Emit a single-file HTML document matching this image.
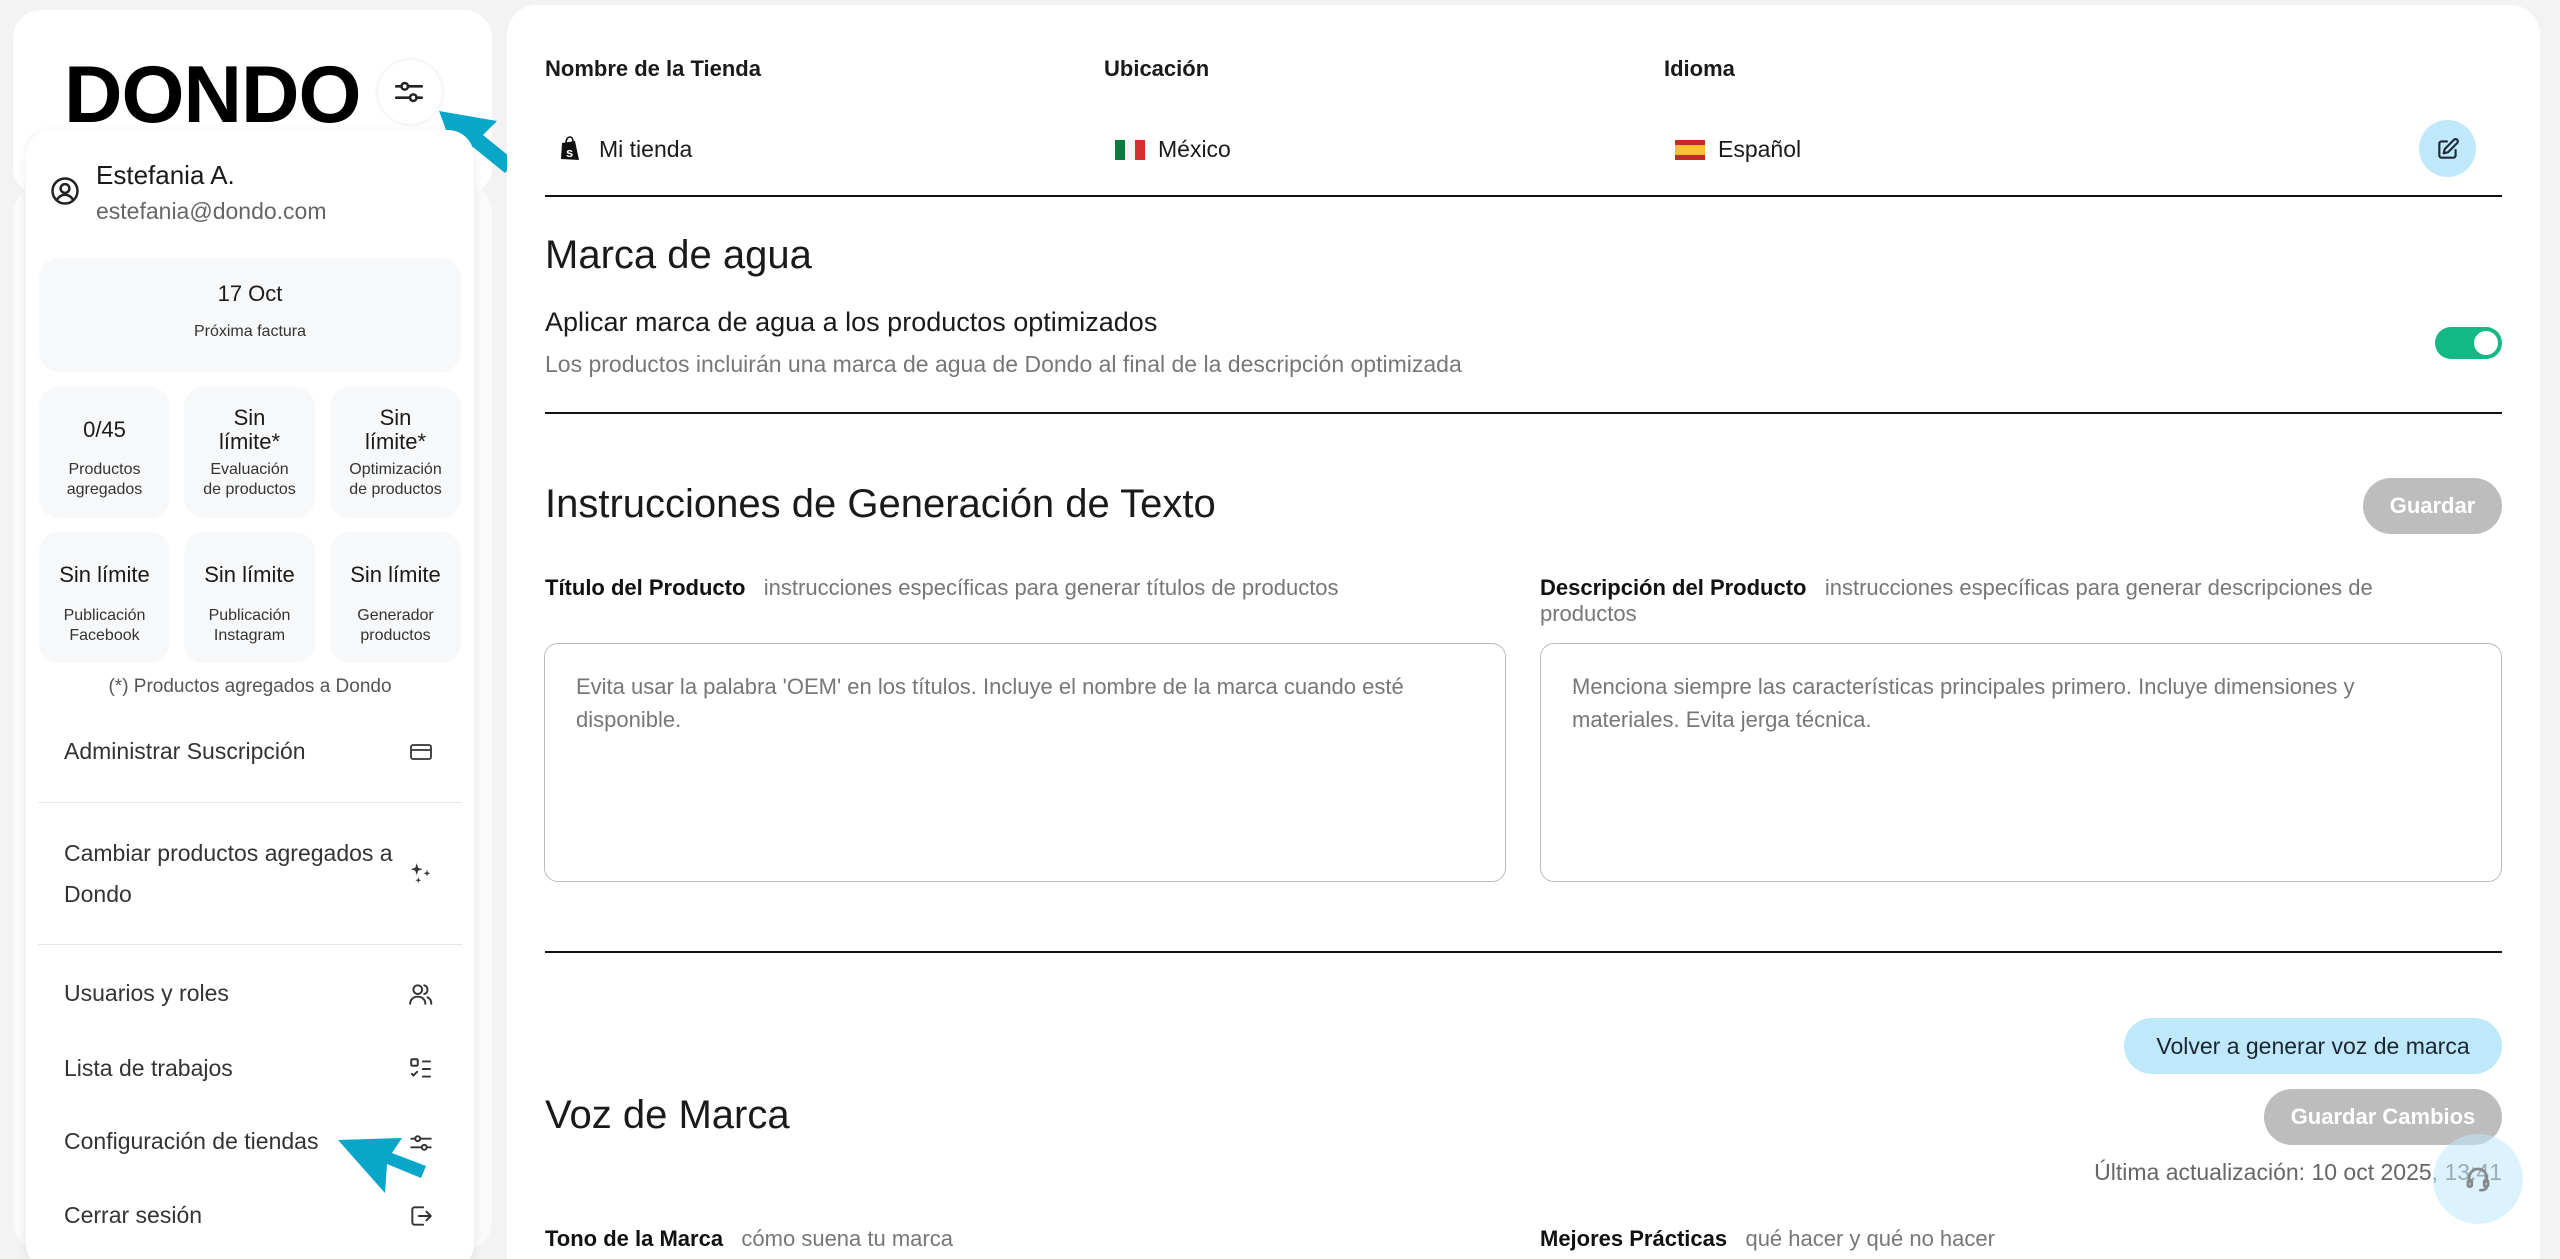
<!DOCTYPE html>
<html style="width:2560px;height:1259px;overflow:hidden"><head><meta charset="utf-8"><style>
*{margin:0;padding:0;box-sizing:border-box}
body{width:2560px;height:1259px;overflow:hidden;background:#f3f3f3;font-family:"Liberation Sans",sans-serif;color:#1a1a1a;position:relative}
.a{position:absolute;white-space:nowrap}
.card{position:absolute;background:#fff;border-radius:30px}
.box{position:absolute;background:#f7f8f9;border-radius:20px;text-align:center}
.v{position:absolute;left:0;right:0;font-size:22px;line-height:24px;color:#1a1a1a}
.l{position:absolute;left:0;right:0;font-size:16px;line-height:20px;color:#333}
.m{position:absolute;left:64px;font-size:23px;color:#333;line-height:26px}
.hr{position:absolute;height:2px;background:#111;left:545px;width:1957px}
.h1{font-size:40px;color:#1a1a1a}
.lab{font-size:22px}
.lab b{color:#111}
.lab span{color:#777}
.ta{position:absolute;border:1.5px solid #bbb;border-radius:14px;top:643px;height:239px;width:962px;padding:26px 31px;font-size:22px;line-height:33px;color:#777;white-space:normal}
</style></head><body>

<div class="card" style="left:13px;top:10px;width:479px;height:185px;border-radius:28px"></div>
<div class="card" style="left:13px;top:185px;width:479px;height:1065px;border-radius:28px;background:#fafafa"></div>
<div class="a" style="left:64px;top:50px;font-size:81px;font-weight:bold;letter-spacing:-1px;line-height:90px;color:#000">DONDO</div>
<div class="a" style="left:378px;top:60px;width:64px;height:64px;border-radius:50%;background:#fff;box-shadow:0 0 4px rgba(0,0,0,.12)"></div>
<svg class="a" style="left:392px;top:75px" width="34" height="34" viewBox="0 0 24 24" fill="none" stroke="#222" stroke-width="1.8" stroke-linecap="round"><circle cx="9" cy="8" r="2.3"/><path d="M3 8h3.7M11.3 8H21"/><circle cx="15" cy="16" r="2.3"/><path d="M3 16h9.7M17.3 16H21"/></svg>
<svg class="a" style="left:425px;top:95px" width="95" height="85" viewBox="0 0 95 85"><polygon points="14,16 72,26 58,40 90,66 80,78 48,52 34,70" fill="#08a7c9"/></svg>

<div class="card" style="left:26px;top:130px;width:448px;height:1140px;border-radius:26px;box-shadow:0 2px 10px rgba(0,0,0,.08)"></div>
<svg class="a" style="left:50px;top:176px" width="30" height="30" viewBox="0 0 24 24" fill="none" stroke="#222" stroke-width="2"><circle cx="12" cy="12" r="10"/><circle cx="12" cy="10" r="3.5"/><path d="M5.5 19c2-3 4-4 6.5-4s4.5 1 6.5 4"/></svg>
<div class="a" style="left:96px;top:160px;font-size:26px;line-height:30px;color:#1a1a1a">Estefania A.</div>
<div class="a" style="left:96px;top:198px;font-size:23px;line-height:26px;color:#666">estefania@dondo.com</div>

<div class="box" style="left:39px;top:258px;width:422px;height:114px"><div class="v" style="top:24px">17 Oct</div><div class="l" style="top:64px">Próxima factura</div></div>

<div class="box" style="left:39px;top:387px;width:131px;height:131px"><div class="v" style="top:31px">0/45</div><div class="l" style="top:73px">Productos<br>agregados</div></div>
<div class="box" style="left:184px;top:387px;width:131px;height:131px"><div class="v" style="top:19px;line-height:24px">Sin<br>límite*</div><div class="l" style="top:73px">Evaluación<br>de productos</div></div>
<div class="box" style="left:330px;top:387px;width:131px;height:131px"><div class="v" style="top:19px;line-height:24px">Sin<br>límite*</div><div class="l" style="top:73px">Optimización<br>de productos</div></div>

<div class="box" style="left:39px;top:532px;width:131px;height:131px"><div class="v" style="top:31px">Sin límite</div><div class="l" style="top:74px">Publicación<br>Facebook</div></div>
<div class="box" style="left:184px;top:532px;width:131px;height:131px"><div class="v" style="top:31px">Sin límite</div><div class="l" style="top:74px">Publicación<br>Instagram</div></div>
<div class="box" style="left:330px;top:532px;width:131px;height:131px"><div class="v" style="top:31px">Sin límite</div><div class="l" style="top:74px">Generador<br>productos</div></div>

<div class="a" style="left:26px;width:448px;text-align:center;top:676px;font-size:19px;color:#555">(*) Productos agregados a Dondo</div>

<div class="m" style="top:738px">Administrar Suscripción</div>
<svg class="a" style="left:408px;top:740px" width="26" height="24" viewBox="0 0 24 24" fill="none" stroke="#333" stroke-width="1.8"><rect x="2" y="5" width="20" height="14" rx="2"/><path d="M2 10h20"/></svg>
<div class="a" style="left:38px;top:802px;width:424px;height:1px;background:#e6e6e6"></div>
<div class="m" style="top:833px;line-height:41px;white-space:normal;width:350px">Cambiar productos agregados a Dondo</div>
<svg class="a" style="left:408px;top:860px" width="26" height="26" viewBox="0 0 24 24" fill="#333"><path d="M8 3l1.3 4.2L13.5 8.5 9.3 9.8 8 14 6.7 9.8 2.5 8.5 6.7 7.2z"/><path d="M17.5 9l.8 2.4 2.4.8-2.4.8-.8 2.4-.8-2.4-2.4-.8 2.4-.8z"/><path d="M9.5 16l.7 2 2 .7-2 .7-.7 2-.7-2-2-.7 2-.7z"/></svg>
<div class="a" style="left:38px;top:944px;width:424px;height:1px;background:#e6e6e6"></div>
<div class="m" style="top:980px">Usuarios y roles</div>
<svg class="a" style="left:408px;top:981px" width="26" height="26" viewBox="0 0 24 24" fill="none" stroke="#333" stroke-width="1.8" stroke-linecap="round"><circle cx="9" cy="8" r="4"/><path d="M2 21c0-4 3-6.5 7-6.5s7 2.5 7 6.5"/><path d="M15 4c2 .5 3 2 3 4s-1 3.5-3 4M18 15c2 1 3.5 3 3.5 6"/></svg>
<div class="m" style="top:1055px">Lista de trabajos</div>
<svg class="a" style="left:408px;top:1056px" width="26" height="26" viewBox="0 0 24 24" fill="none" stroke="#333" stroke-width="1.8"><rect x="3" y="3" width="6" height="6" rx="1"/><path d="M3 16l2 2 4-4M13 5h8M13 12h8M13 19h8"/></svg>
<div class="m" style="top:1128px">Configuración de tiendas</div>
<svg class="a" style="left:408px;top:1130px" width="26" height="26" viewBox="0 0 24 24" fill="none" stroke="#333" stroke-width="1.8" stroke-linecap="round"><circle cx="9" cy="8" r="2.3"/><path d="M3 8h3.7M11.3 8H21"/><circle cx="15" cy="16" r="2.3"/><path d="M3 16h9.7M17.3 16H21"/></svg>
<svg class="a" style="left:330px;top:1128px" width="100" height="72" viewBox="0 0 100 72"><polygon points="8,12 72,10 62,25 96,38 91,50 57,36 55,65" fill="#08a7c9"/></svg>
<div class="m" style="top:1202px">Cerrar sesión</div>
<svg class="a" style="left:408px;top:1203px" width="26" height="26" viewBox="0 0 24 24" fill="none" stroke="#333" stroke-width="1.8" stroke-linecap="round" stroke-linejoin="round"><path d="M14 4H6a2 2 0 0 0-2 2v12a2 2 0 0 0 2 2h8"/><path d="M10 12h11M17 8l4 4-4 4"/></svg>

<div class="card" style="left:507px;top:5px;width:2033px;height:1254px;border-radius:30px 30px 0 0"></div>

<div class="a" style="left:545px;top:56px;font-size:22px;font-weight:bold">Nombre de la Tienda</div>
<div class="a" style="left:1104px;top:56px;font-size:22px;font-weight:bold">Ubicación</div>
<div class="a" style="left:1664px;top:56px;font-size:22px;font-weight:bold">Idioma</div>

<svg class="a" style="left:559px;top:136px" width="22" height="26" viewBox="0 0 22 26"><path d="M3 7l13-2 4 19-18-1z" fill="#111"/><path d="M7 7c0-4 2-6 4-6s3 2 3 5" fill="none" stroke="#111" stroke-width="1.6"/><text x="7" y="21" font-size="13" font-weight="bold" fill="#fff" font-family="Liberation Sans">s</text></svg>
<div class="a" style="left:599px;top:136px;font-size:23px">Mi tienda</div>
<div class="a" style="left:1115px;top:140px;width:30px;height:20px;background:linear-gradient(90deg,#0b7a3e 0 33%,#f4f4f4 33% 66%,#d32f2f 66%)"></div>
<div class="a" style="left:1158px;top:136px;font-size:23px">México</div>
<div class="a" style="left:1675px;top:140px;width:30px;height:20px;background:linear-gradient(#c62828 0 25%,#fbc02d 25% 75%,#c62828 75%)"></div>
<div class="a" style="left:1718px;top:136px;font-size:23px">Español</div>
<div class="a" style="left:2419px;top:120px;width:57px;height:57px;border-radius:50%;background:#bfe9fb"></div>
<svg class="a" style="left:2435px;top:136px" width="26" height="26" viewBox="0 0 24 24" fill="none" stroke="#1d2a3a" stroke-width="2" stroke-linecap="round" stroke-linejoin="round"><path d="M11 5H6a2 2 0 0 0-2 2v11a2 2 0 0 0 2 2h11a2 2 0 0 0 2-2v-5"/><path d="M17.5 3.5a2.1 2.1 0 0 1 3 3L12 15l-4 1 1-4z"/></svg>
<div class="hr" style="top:195px"></div>

<div class="a h1" style="left:545px;top:233px">Marca de agua</div>
<div class="a" style="left:545px;top:307px;font-size:27px">Aplicar marca de agua a los productos optimizados</div>
<div class="a" style="left:545px;top:351px;font-size:23px;color:#777">Los productos incluirán una marca de agua de Dondo al final de la descripción optimizada</div>
<div class="a" style="left:2435px;top:327px;width:67px;height:32px;border-radius:16px;background:#14b885"></div>
<div class="a" style="left:2474px;top:331px;width:24px;height:24px;border-radius:50%;background:#fff"></div>
<div class="hr" style="top:412px"></div>

<div class="a h1" style="left:545px;top:482px">Instrucciones de Generación de Texto</div>
<div class="a" style="left:2363px;top:478px;width:139px;height:56px;border-radius:28px;background:#bdbdbd;color:#fff;font-size:22px;font-weight:bold;text-align:center;line-height:56px">Guardar</div>

<div class="a lab" style="left:545px;top:575px"><b>Título del Producto</b>&nbsp;&nbsp; <span>instrucciones específicas para generar títulos de productos</span></div>
<div class="a lab" style="left:1540px;top:575px;white-space:normal;width:930px;line-height:26px"><b>Descripción del Producto</b>&nbsp;&nbsp; <span>instrucciones específicas para generar descripciones de productos</span></div>
<div class="ta" style="left:544px">Evita usar la palabra 'OEM' en los títulos. Incluye el nombre de la marca cuando esté disponible.</div>
<div class="ta" style="left:1540px;padding-right:90px">Menciona siempre las características principales primero. Incluye dimensiones y materiales. Evita jerga técnica.</div>
<div class="hr" style="top:951px"></div>

<div class="a" style="left:2124px;top:1018px;width:378px;height:56px;border-radius:28px;background:#bfe9fb;color:#1a2533;font-size:23px;text-align:center;line-height:56px">Volver a generar voz de marca</div>
<div class="a" style="left:2264px;top:1089px;width:238px;height:56px;border-radius:28px;background:#bdbdbd;color:#fff;font-size:22px;font-weight:bold;text-align:center;line-height:56px">Guardar Cambios</div>
<div class="a h1" style="left:545px;top:1093px">Voz de Marca</div>
<div class="a" style="right:58px;top:1159px;font-size:23px;color:#666">Última actualización: 10 oct 2025, 13:41</div>
<div class="a" style="left:2433px;top:1134px;width:90px;height:90px;border-radius:50%;background:rgba(191,233,251,.55)"></div>
<svg class="a" style="left:2463px;top:1164px" width="30" height="30" viewBox="0 0 24 24" fill="none" stroke="#888" stroke-width="2.2" stroke-linecap="round"><path d="M5 14v-3a7 7 0 0 1 14 0v3"/><rect x="4" y="13" width="3" height="5" rx="1"/><rect x="17" y="13" width="3" height="5" rx="1"/><path d="M19 18c0 2-2 3-5 3"/></svg>
<div class="a lab" style="left:545px;top:1226px"><b>Tono de la Marca</b>&nbsp;&nbsp; <span>cómo suena tu marca</span></div>
<div class="a lab" style="left:1540px;top:1226px"><b>Mejores Prácticas</b>&nbsp;&nbsp; <span>qué hacer y qué no hacer</span></div>
</body></html>
